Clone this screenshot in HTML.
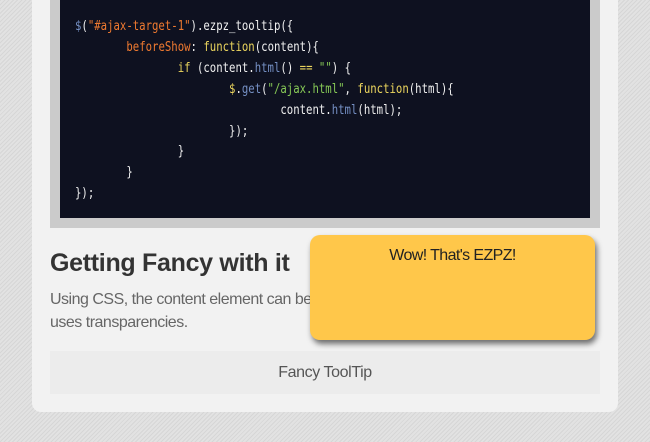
<!DOCTYPE html>
<html><head><style>
body{margin:0;width:650px;height:442px;overflow:hidden;background:#dcdcdc;background-image:repeating-linear-gradient(135deg,#d6d6d6 0 1px,#e2e2e2 1px 3px);font-family:"Liberation Sans",sans-serif;position:relative}
.panel{position:absolute;left:32px;top:-20px;width:586px;height:432px;background:#f2f2f2;border-radius:9px}
.frame{position:absolute;left:50px;top:-10px;width:550px;height:238px;background:#cbcbcb}
.code{position:absolute;left:60px;top:-10px;width:530px;height:228px;background:#0e1120}
pre{margin:0;position:absolute;left:75px;top:17px;font-family:"DejaVu Sans Mono",monospace;font-size:13px;line-height:20.9px;color:#f0f0f0;tab-size:8;transform:scaleX(0.82);transform-origin:0 0}
.o{color:#f07a30}.y{color:#ecd65e}.b{color:#7590c4}.g{color:#86c856}
h2{position:absolute;left:50px;top:249px;margin:0;font-size:25px;color:#333;font-weight:bold;letter-spacing:-0.3px}
p{position:absolute;left:50px;top:288px;margin:0;font-size:16px;line-height:23px;color:#666;width:530px;letter-spacing:-0.5px}
.btn{position:absolute;left:50px;top:351px;width:550px;height:43px;background:#ececec;text-align:center;line-height:43px;font-size:16px;color:#555;letter-spacing:-0.4px}
.tip{position:absolute;left:310px;top:235px;width:285px;height:105px;background:#ffc74a;border-radius:10px;box-shadow:2px 4px 6px rgba(0,0,0,.55);text-align:center;font-size:16px;color:#222;padding-top:12px;box-sizing:border-box;letter-spacing:-0.6px}
</style></head><body>
<div class="panel"></div>
<div class="frame"></div>
<div class="code"></div>
<pre><span class="b">$</span>(<span class="o">"#ajax-target-1"</span>).ezpz_tooltip({
	<span class="o">beforeShow</span>: <span class="y">function</span>(content){
		<span class="y">if</span> (content.<span class="b">html</span>() <span class="y">==</span> <span class="g">""</span>) {
			<span class="y">$</span>.<span class="b">get</span>(<span class="g">"/ajax.html"</span>, <span class="y">function</span>(html){
				content.<span class="b">html</span>(html);
			});
		}
	}
});</pre>
<h2>Getting Fancy with it</h2>
<p>Using CSS, the content element can be styled to look like anything; this one uses transparencies.</p>
<div class="btn">Fancy ToolTip</div>
<div class="tip">Wow! That's EZPZ!</div>
</body></html>
